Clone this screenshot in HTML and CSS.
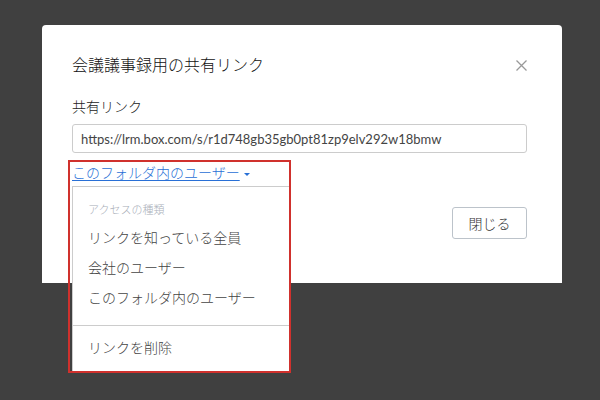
FILE: index.html
```html
<!DOCTYPE html>
<html lang="ja">
<head>
  <meta charset="UTF-8">
  <title>共有リンク</title>
  <link rel="stylesheet" href="styles.css">
</head>
<body>
<div class="modal">
  <div class="modal-header">
    <h2 class="modal-title">会議議事録用の共有リンク</h2>
    <button class="close-btn" aria-label="閉じる">
      <svg width="11" height="11" viewBox="0 0 11 11"><path d="M0.5 0.5 L10.5 10.5 M10.5 0.5 L0.5 10.5" stroke="#999" stroke-width="1.3" fill="none"/></svg>
    </button>
  </div>
  <label class="field-label">共有リンク</label>
  <input class="link-input" type="text" value="https://lrm.box.com/s/r1d748gb35gb0pt81zp9elv292w18bmw" readonly>
  <div class="access-row">
    <a class="access-link" href="#">このフォルダ内のユーザー</a><span class="caret"></span>
    <div class="dropdown">
      <div class="dropdown-header">アクセスの種類</div>
      <div class="dropdown-item">リンクを知っている全員</div>
      <div class="dropdown-item">会社のユーザー</div>
      <div class="dropdown-item">このフォルダ内のユーザー</div>
      <div class="dropdown-sep"></div>
      <div class="dropdown-item">リンクを削除</div>
    </div>
    <div class="highlight"></div>
  </div>
  <div class="modal-footer">
    <button class="btn">閉じる</button>
  </div>
</div>
</body>
</html>
```

FILE: styles.css
```css
html, body { margin: 0; height: 100%; }
body { background: #404040; padding: 25px 0 0 42px; box-sizing: border-box; font-family: Lato, "Noto Sans CJK JP", sans-serif; font-weight: 300; color: #333; overflow: hidden; }
.modal { width: 520px; height: 258px; background: #fff; border-radius: 4px 4px 0 0; padding: 28px 35px 0 30px; box-sizing: border-box; }
.modal-header { display: flex; justify-content: space-between; align-items: center; height: 24px; }
.modal-title { margin: 0; font-size: 16px; font-weight: 300; line-height: 24px; color: #111; }
.close-btn { border: none; background: none; padding: 0; display: flex; cursor: pointer; }
.field-label { display: block; margin-top: 20px; font-size: 14px; line-height: 20px; color: #222; }
.link-input { display: block; width: 100%; height: 29px; margin-top: 7px; box-sizing: border-box; border: 1px solid #ccc; border-radius: 3px; padding: 0 8px; font-family: Lato, sans-serif; font-weight: 400; font-size: 13px; color: #444; }
.access-row { position: relative; margin-top: 9px; height: 22px; line-height: 22px; font-size: 14px; }
.access-link { color: #2970d6; text-decoration: underline; text-underline-offset: 2px; }
.caret { display: inline-block; width: 0; height: 0; border-left: 3px solid transparent; border-right: 3px solid transparent; border-top: 3px solid #2970d6; margin-left: 4px; vertical-align: middle; }
.dropdown { position: absolute; left: 0; top: 24px; width: 218px; height: 186px; box-sizing: border-box; background: #fff; border-top: 1px solid #ccc; border-left: 1px solid #ccc; padding-top: 15px; z-index: 2; }
.dropdown-header { padding-left: 15px; font-size: 11px; line-height: 16px; color: #a8aeb8; }
.dropdown-item { padding-left: 15px; font-size: 14px; line-height: 30px; color: #444; }
.dropdown-header + .dropdown-item { margin-top: 5px; }
.dropdown-sep { height: 1px; background: #ccc; margin: 12px 0 7px; }
.highlight { position: absolute; left: -4px; top: -2px; width: 223px; height: 213px; box-sizing: border-box; border: 2px solid #d0312d; z-index: 3; }
.modal-footer { display: flex; justify-content: flex-end; margin-top: 23px; }
.btn { width: 75px; height: 32px; border: 1px solid #bcc3ca; border-radius: 3px; background: #fff; font-family: Lato, "Noto Sans CJK JP", sans-serif; font-weight: 300; font-size: 14px; color: #333; }
```
